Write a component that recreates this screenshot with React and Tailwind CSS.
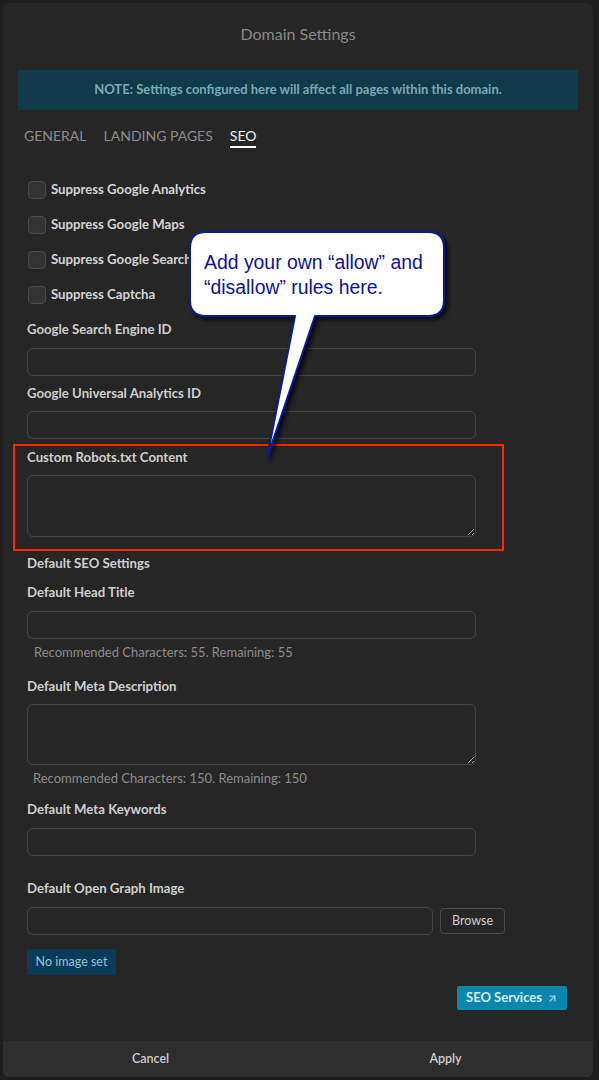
import { ArrowUpRight } from 'lucide-react'

const checks = [
  'Suppress Google Analytics',
  'Suppress Google Maps',
  'Suppress Google Search',
  'Suppress Captcha',
]

function Label({ children, className = '' }) {
  return (
    <div className={`h-[18px] text-[13.2px] leading-[18px] font-bold text-[#cfcfcf] ${className}`}>
      {children}
    </div>
  )
}

function Input({ className = '' }) {
  return (
    <input
      type="text"
      className={`block h-[28px] rounded-[6px] border border-[#454545] bg-transparent px-2 text-[13px] text-[#ddd] outline-none ${className}`}
    />
  )
}

function TextArea({ className = '' }) {
  return (
    <textarea
      className={`block w-full resize-y rounded-[6px] border border-[#454545] bg-transparent px-2 py-1 text-[13px] text-[#ddd] outline-none ${className}`}
    />
  )
}

function Callout() {
  return (
    <div className="absolute left-[188px] top-[230px] h-[232px] w-[262px]">
      <svg
        width="262"
        height="232"
        viewBox="0 0 262 232"
        className="absolute left-0 top-0 drop-shadow-[3px_3px_2px_rgba(0,0,0,0.75)]"
      >
        <path
          d="M18 2 H240 Q256 2 256 18 V70 Q256 86 240 86 H127 L79 228 L107 86 H18 Q2 86 2 70 V18 Q2 2 18 2 Z"
          fill="#ffffff"
          stroke="#0b1b9c"
          strokeWidth="2"
          strokeLinejoin="round"
        />
      </svg>
      <div className="absolute left-[16px] top-[20px] font-['Liberation_Sans',Arial,sans-serif] text-[19.4px] leading-[25px] text-[#10109e]">
        <div>Add your own “allow” and</div>
        <div>“disallow” rules here.</div>
      </div>
    </div>
  )
}

export default function App() {
  return (
    <div className="relative h-[1080px] overflow-hidden bg-[#1e1e1e] p-[3px] pr-[6px] font-['Lato','Open_Sans',sans-serif]">
      <div className="flex h-[1074px] flex-col overflow-hidden rounded-[6px] bg-[#262626]">
        <div className="flex-1">
          <div className="mt-[21px] h-[20px] text-center text-[16px] leading-[20px] text-[#8a8a8a]">
            Domain Settings
          </div>

          <div className="mx-[15px] mt-[26px] flex h-[40px] items-center justify-center bg-[#0f3a47] text-[13px] font-bold text-[#79a9b8]">
            NOTE: Settings configured here will affect all pages within this domain.
          </div>

          <div className="ml-[21px] mt-[16px] flex gap-[17px] text-[14px] leading-[20px]">
            <div className="border-b-2 border-transparent text-[#8c8c8c]">GENERAL</div>
            <div className="border-b-2 border-transparent text-[#8c8c8c]">LANDING PAGES</div>
            <div className="border-b-2 border-white text-[#f2f2f2]">SEO</div>
          </div>

          <div className="ml-[25px] mt-[24px]">
            {checks.map((c) => (
              <div key={c} className="flex h-[35px] items-center gap-[5px]">
                <span className="h-[18px] w-[18px] rounded-[4px] border border-[#4a4a4a] bg-[#333333]" />
                <span className="text-[13.2px] font-bold text-[#d4d4d4]">{c}</span>
              </div>
            ))}
          </div>

          <div className="ml-[24px] w-[449px]">
            <Label className="mt-[8px]">Google Search Engine ID</Label>
            <Input className="mt-[10px] w-full" />
            <Label className="mt-[8px]">Google Universal Analytics ID</Label>
            <Input className="mt-[9px] w-full" />

            <div className="-ml-[14px] mt-[5px] w-[491px] border-2 border-[#ff2600] pb-[12px] pl-[12px] pr-[26px] pt-[2px]">
              <Label>Custom Robots.txt Content</Label>
              <TextArea className="mt-[9px] h-[62px]" />
            </div>

            <Label className="mt-[3px]">Default SEO Settings</Label>
            <Label className="mt-[11px]">Default Head Title</Label>
            <Input className="mt-[10px] w-full" />
            <div className="ml-[7px] mt-[5px] h-[16px] text-[13px] leading-[16px] text-[#8c8c8c]">
              Recommended Characters: 55. Remaining: 55
            </div>

            <Label className="mt-[17px]">Default Meta Description</Label>
            <TextArea className="mt-[9px] h-[61px]" />
            <div className="ml-[6px] mt-[5px] h-[16px] text-[13px] leading-[16px] text-[#8c8c8c]">
              Recommended Characters: 150. Remaining: 150
            </div>

            <Label className="mt-[14px]">Default Meta Keywords</Label>
            <Input className="mt-[10px] w-full" />

            <Label className="mt-[23px]">Default Open Graph Image</Label>
            <div className="mt-[10px] flex w-[478px] items-center">
              <Input className="w-[406px] shrink-0" />
              <button className="ml-[7px] h-[26px] w-[65px] shrink-0 rounded-[4px] border border-[#4a4a4a] text-[12.5px] text-[#cfcfcf]">
                Browse
              </button>
            </div>

            <div className="mt-[14px] flex h-[26px] w-[89px] items-center justify-center bg-[#0b3a56] text-[12.5px] text-[#92c2dc]">
              No image set
            </div>
          </div>

          <div className="mt-[11px] flex justify-end pr-[26px]">
            <button className="flex h-[24px] w-[110px] items-center justify-center gap-[5px] rounded-[2px] bg-[#0b86ad] text-[13px] font-bold text-[#d6edf5]">
              SEO Services
              <ArrowUpRight size={11} strokeWidth={3.5} className="text-[#86c8df]" />
            </button>
          </div>
        </div>

        <div className="flex h-[36px] shrink-0 bg-[#2e2e2e] text-[12.5px] font-semibold text-[#cfcfcf]">
          <div className="flex flex-1 items-center justify-center">Cancel</div>
          <div className="flex flex-1 items-center justify-center">Apply</div>
        </div>
      </div>

      <Callout />
    </div>
  )
}
